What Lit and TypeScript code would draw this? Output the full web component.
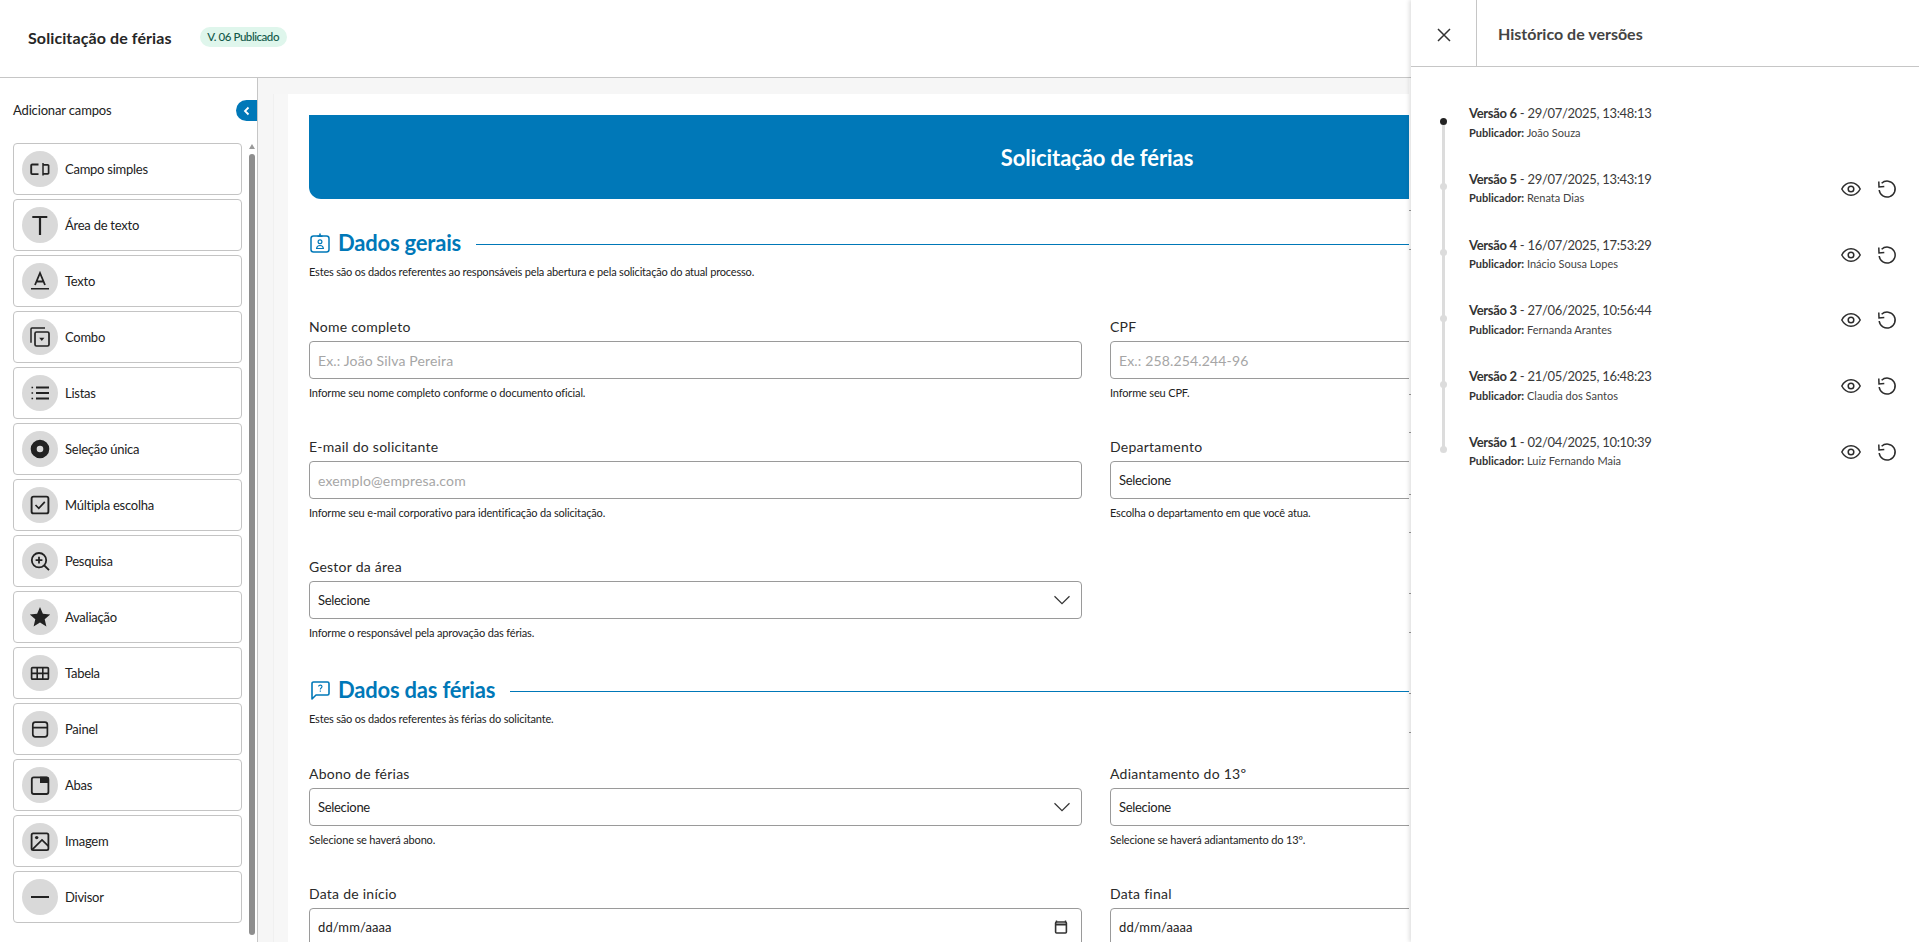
import { LitElement, html, css, svg } from "lit";
import { customElement } from "lit/decorators.js";

const ic = (b: unknown) => html`<svg class="ic" viewBox="0 0 36 36" width="36" height="36">${b}</svg>`;

const FIELDS: [string, unknown][] = [
  ["Campo simples", svg`<path d="M16.500 13.500H10.200a1 1 0 0 0-1 1v7.600a1 1 0 0 0 1 1h6.300" fill="none" stroke="#222" stroke-width="1.900"/><path d="M21 12v12.500" stroke="#222" stroke-width="1.500"/><path d="M21 13.800h4.800a.8.8 0 0 1 .8.8v7.400a.8.8 0 0 1-.8.8H21" fill="none" stroke="#222" stroke-width="1.700"/>`],
  ["Área de texto", svg`<path d="M10.300 10h15M18 10v18" fill="none" stroke="#222" stroke-width="2.200"/>`],
  ["Texto", svg`<path d="M13 22L18 10l5 12M14.600 18.500h6.800" fill="none" stroke="#222" stroke-width="1.800"/><path d="M9 25.800h18" stroke="#222" stroke-width="1.600"/>`],
  ["Combo", svg`<path d="M9 23.700V10a1 1 0 0 1 1-1h13" fill="none" stroke="#222" stroke-width="1.500"/><rect x="13" y="13" width="14" height="14" rx="1.500" fill="none" stroke="#222" stroke-width="1.700"/><path d="M17.200 18.800h5.200L19.800 22z" fill="#222"/>`],
  ["Listas", svg`<path d="M14 12.500h13M14 18h13M14 23.500h13" stroke="#222" stroke-width="1.800"/><path d="M10.300 11.700v1.600M10.300 17.200v1.600M10.300 22.700v1.600" stroke="#222" stroke-width="1.600"/>`],
  ["Seleção única", svg`<circle cx="18" cy="18" r="6.300" fill="none" stroke="#222" stroke-width="6"/>`],
  ["Múltipla escolha", svg`<rect x="9.600" y="9.600" width="16.800" height="16.800" rx="2" fill="none" stroke="#222" stroke-width="1.900"/><path d="M13.500 18l3.300 3.300 6-6.500" fill="none" stroke="#222" stroke-width="1.700"/>`],
  ["Pesquisa", svg`<circle cx="17" cy="17.200" r="7.200" fill="none" stroke="#222" stroke-width="1.800"/><path d="M22.300 22.500L27 27.200M13.600 17.200h6.800M17 13.800v6.800" fill="none" stroke="#222" stroke-width="1.800"/>`],
  ["Avaliação", svg`<path d="M18 8l2.900 6.800 7.300.6-5.500 4.800 1.700 7.200-6.400-3.800-6.400 3.800 1.700-7.200-5.500-4.800 7.300-.6z" fill="#222"/>`],
  ["Tabela", svg`<rect x="9.600" y="12.600" width="16.800" height="11.600" rx="1" fill="none" stroke="#222" stroke-width="1.700"/><path d="M15.200 12.600v11.600M20.800 12.600v11.600M9.600 18.400h16.800" stroke="#222" stroke-width="1.600"/>`],
  ["Painel", svg`<rect x="10.800" y="11.200" width="14.600" height="14.600" rx="2.600" fill="none" stroke="#222" stroke-width="1.700"/><path d="M10.800 16.600h14.600" stroke="#222" stroke-width="1.700"/>`],
  ["Abas", svg`<rect x="9.800" y="10.400" width="16.600" height="16.600" rx="2" fill="none" stroke="#222" stroke-width="1.800"/><path d="M18 9.800h7a2 2 0 0 1 2 2V16h-9z" fill="#222"/>`],
  ["Imagem", svg`<rect x="9.600" y="10.400" width="16.800" height="16.800" rx="1.600" fill="none" stroke="#222" stroke-width="1.800"/><circle cx="14.700" cy="14.600" r="1.700" fill="#222"/><path d="M10.200 26.600L20 17l6.400 6.200" fill="none" stroke="#222" stroke-width="1.700"/>`],
  ["Divisor", svg`<path d="M9 18h18" stroke="#222" stroke-width="1.800"/>`],
];

const VERSIONS = [
  ["Versão 6", "29/07/2025, 13:48:13", "João Souza"],
  ["Versão 5", "29/07/2025, 13:43:19", "Renata Dias"],
  ["Versão 4", "16/07/2025, 17:53:29", "Inácio Sousa Lopes"],
  ["Versão 3", "27/06/2025, 10:56:44", "Fernanda Arantes"],
  ["Versão 2", "21/05/2025, 16:48:23", "Claudia dos Santos"],
  ["Versão 1", "02/04/2025, 10:10:39", "Luiz Fernando Maia"],
];

const TICKS = [210, 249, 394, 432, 494, 532, 593, 632, 693, 732];

type Kind = "input" | "select" | "date";
const chevron = html`<svg class="tail chev" width="18" height="18" viewBox="0 0 18 18"><path d="M1.500 5.200L9 12.600l7.500-7.400" fill="none" stroke="#333" stroke-width="1.200"/></svg>`;
const calendar = html`<svg class="tail" width="18" height="18" viewBox="0 0 18 18"><path d="M4.500 2.500v2M13.500 2.500v2" stroke="#333" stroke-width="1.400"/><rect x="3.600" y="4" width="10.800" height="11" rx="1" fill="none" stroke="#333" stroke-width="1.600"/><path d="M3.600 6.500h10.800" stroke="#333" stroke-width="2"/></svg>`;

function field(label: string, kind: Kind, value: string, hint: string, placeholder = false) {
  return html`<div class="field">
    <div class="label">${label}</div>
    <div class="box ${placeholder ? "ph" : ""} ${kind}"><span>${value}</span>${kind === "select" ? chevron : kind === "date" ? calendar : ""}</div>
    ${hint ? html`<div class="hint">${hint}</div>` : ""}
  </div>`;
}

@customElement("app-root")
export class AppRoot extends LitElement {
  static styles = css`
    :host { display: block; position: relative; width: 100%; height: 100vh; overflow: hidden; background: #fff;
      font-family: "Lato", "Noto Sans", sans-serif; color: #222; }
    * { box-sizing: border-box; }
    .top { height: 78px; border-bottom: 1px solid #c6c6c6; display: flex; align-items: center; padding: 0 0 2px 28px; }
    .top h1 { margin: 0; font-size: 16px; font-weight: 700; color: #262626; line-height: 20px; letter-spacing: 0.1px; }
    .badge { margin: -1px 0 0 28px; height: 20px; width: 87px; border-radius: 10px; background: #dff6ec; color: #12594a;
      font-size: 11.500px; line-height: 20px; text-align: center; font-weight: 500; white-space: nowrap; letter-spacing: -0.45px; }
    .body { display: flex; height: calc(100vh - 78px); }
    .side { width: 258px; flex: none; border-right: 1px solid #c6c6c6; display: flex; flex-direction: column; }
    .side-head { display: flex; justify-content: space-between; align-items: center; height: 21px; margin: 22px 0 22px 13px; font-size: 13px; letter-spacing: -0.15px; }
    .side-head > span:first-child { padding-bottom: 2px; }
    .collapse { width: 21px; height: 21px; background: #0078b8; border-radius: 11px 0 0 11px; display: flex; align-items: center; justify-content: center; }
    .side-main { display: flex; flex: 1; min-height: 0; }
    .list { margin: 0 0 0 13px; padding: 0; list-style: none; width: 229px; display: flex; flex-direction: column; gap: 4px; }
    .item { height: 52px; border: 1px solid #c4c4c4; border-radius: 4px; display: flex; align-items: center; padding-left: 8px; gap: 7px; font-size: 13px; letter-spacing: -0.25px; }
    .item span { padding-bottom: 1px; }
    .ic { width: 36px; height: 36px; background: #d9d9d9; border-radius: 50%; flex: none; }
    .scroll { margin-left: 7px; width: 6px; display: flex; flex-direction: column; align-items: center; height: 792px; }
    .arrow { margin-top: 1px; width: 0; height: 0; border: 3px solid transparent; border-top: 0; border-bottom: 5px solid #9a9a9a; }
    .thumb { margin-top: 5px; flex: 1; width: 6px; border-radius: 3px; background: #8e8e8e; }
    .canvas { flex: 1; min-width: 0; background: #f6f6f6; padding: 16px 0 0 15px; overflow: hidden; }
    .sheet { width: 1640px; height: 100%; background: #f7f7f7; border-left: 1px solid #f0f0f0; padding-left: 14px; }
    .page { background: #fff; height: 100%; padding: 21px 0 0 21px; }
    .banner { width: 1578px; height: 84px; background: #0078b8; border-bottom-left-radius: 12px; color: #fff; display: flex; align-items: center;
      justify-content: center; font-size: 22px; font-weight: 700; letter-spacing: -0.1px; padding-right: 2px; }
    .sec { display: flex; align-items: center; height: 30px; margin-top: 29px; width: 1100px; }
    .sec.second { margin-top: 35.300px; }
    .sec svg { flex: none; width: 22px; height: 22px; margin-right: 7px; margin-left: 0; }
    .sec h2 { margin: 0; font-size: 22px; font-weight: 700; color: #0078b8; line-height: 30px; white-space: nowrap; letter-spacing: -0.2px; }
    .sec i { flex: 1; height: 1px; background: #0078b8; margin-left: 15px; margin-top: 2px; }
    .desc { margin: 7px 0 0; font-size: 11px; line-height: 14px; color: #222; letter-spacing: -0.18px; }
    .grid { display: grid; grid-template-columns: 773px 773px; column-gap: 28px; row-gap: 38px; margin-top: 39px; }
    .label { font-size: 14px; line-height: 17px; letter-spacing: 0.25px; color: #2a2a2a; }
    .box { margin-top: 6px; height: 38px; border: 1px solid #9a9a9a; border-radius: 4px; padding: 0 9px 0 8px; display: flex; align-items: center;
      justify-content: space-between; font-size: 13px; letter-spacing: -0.3px; color: #222; }
    .box.ph { color: #a6a6a6; font-size: 14px; letter-spacing: 0.15px; }
    .box.date span { letter-spacing: 0.1px; }
    .hint { margin-top: 7px; font-size: 11px; line-height: 14px; color: #222; letter-spacing: -0.16px; }
    .tail { flex: none; margin-right: 2px; }
    .tail.chev { margin-right: 1px; }
    .ticks { position: absolute; left: 1409px; top: 78px; bottom: 0; width: 2px; background: #fff; }
    .ticks b { position: absolute; left: 0; width: 2px; height: 1px; background: #9a9a9a; }
    .panel { position: absolute; left: 1411px; top: 0; right: 0; bottom: 0; background: #fff; box-shadow: -2px 0 4px rgba(0,0,0,.12); }
    .p-head { height: 67px; border-bottom: 1px solid #c6c6c6; display: flex; }
    .close { width: 66px; border-right: 1px solid #c6c6c6; display: flex; align-items: center; justify-content: center; padding-top: 3px; }
    .p-head h3 { margin: 0 0 0 21px; font-size: 16px; font-weight: 700; line-height: 67px; color: #444; height: 67px; }
    .tl { padding: 36px 22px 0 25.600px; margin: 0; list-style: none; }
    .v { position: relative; height: 65.800px; display: flex; }
    .dotcol { width: 14px; flex: none; position: relative; }
    .dot { position: absolute; left: 3.200px; top: 14.500px; width: 7px; height: 7px; border-radius: 50%; background: #dcdcdc; }
    .v:first-child .dot { background: #222; }
    .rail { position: absolute; left: 5.700px; top: 18px; width: 2.400px; height: 65.800px; background: #dcdcdc; }
    .txt { margin-left: 18.400px; flex: 1; }
    .vt { font-size: 13px; line-height: 20px; color: #3a3a3a; letter-spacing: -0.3px; }
    .vt b { font-weight: 700; color: #333; }
    .vp { font-size: 11px; line-height: 16px; margin-top: 1.500px; color: #444; }
    .vp b { font-weight: 700; color: #333; }
    .acts { display: flex; gap: 16.400px; margin-top: 10px; align-self: flex-start; }
  `;

  render() {
    return html`
      <header class="top"><h1>Solicitação de férias</h1><span class="badge">V. 06 Publicado</span></header>
      <div class="body">
        <aside class="side">
          <div class="side-head"><span>Adicionar campos</span>
            <span class="collapse"><svg width="10" height="10" viewBox="0 0 10 10"><path d="M6.500 1.500L3 5l3.500 3.500" fill="none" stroke="#fff" stroke-width="1.800"/></svg></span>
          </div>
          <div class="side-main">
            <ul class="list">${FIELDS.map(([n, b]) => html`<li class="item">${ic(b)}<span>${n}</span></li>`)}</ul>
            <div class="scroll"><div class="arrow"></div><div class="thumb"></div></div>
          </div>
        </aside>
        <main class="canvas"><div class="sheet"><div class="page">
          <div class="banner">Solicitação de férias</div>
          <div class="sec">
            <svg viewBox="0 0 22 22"><rect x="2" y="4" width="18" height="16" rx="2.500" fill="none" stroke="#0078b8" stroke-width="1.500"/><path d="M8.500 4.200h5M11 1.500v3" stroke="#0078b8" stroke-width="1.600"/><circle cx="11" cy="9.800" r="1.900" fill="none" stroke="#0078b8" stroke-width="1.200"/><path d="M7.600 16.500c.2-2.200 1.600-3 3.400-3s3.200.8 3.400 3z" fill="none" stroke="#0078b8" stroke-width="1.200"/></svg>
            <h2>Dados gerais</h2><i></i>
          </div>
          <p class="desc">Estes são os dados referentes ao responsáveis pela abertura e pela solicitação do atual processo.</p>
          <div class="grid">
            ${field("Nome completo", "input", "Ex.: João Silva Pereira", "Informe seu nome completo conforme o documento oficial.", true)}
            ${field("CPF", "input", "Ex.: 258.254.244-96", "Informe seu CPF.", true)}
            ${field("E-mail do solicitante", "input", "exemplo@empresa.com", "Informe seu e-mail corporativo para identificação da solicitação.", true)}
            ${field("Departamento", "select", "Selecione", "Escolha o departamento em que você atua.")}
            ${field("Gestor da área", "select", "Selecione", "Informe o responsável pela aprovação das férias.")}
          </div>
          <div class="sec second">
            <svg viewBox="0 0 22 22"><path d="M3 20V4.500A1.500 1.500 0 0 1 4.500 3h14A1.500 1.500 0 0 1 20 4.500v10a1.500 1.500 0 0 1-1.500 1.500H7z" fill="none" stroke="#0078b8" stroke-width="1.600" stroke-linejoin="round"/><path d="M9.600 7.600c0-2 3.400-2 3.400 0 0 1.400-1.700 1.300-1.700 2.800M11.300 11.600v1.200" fill="none" stroke="#0078b8" stroke-width="1.100"/></svg>
            <h2>Dados das férias</h2><i></i>
          </div>
          <p class="desc">Estes são os dados referentes às férias do solicitante.</p>
          <div class="grid">
            ${field("Abono de férias", "select", "Selecione", "Selecione se haverá abono.")}
            ${field("Adiantamento do 13º", "select", "Selecione", "Selecione se haverá adiantamento do 13º.")}
            ${field("Data de início", "date", "dd/mm/aaaa", "")}
            ${field("Data final", "date", "dd/mm/aaaa", "")}
          </div>
        </div></div></main>
      </div>
      <div class="ticks">${TICKS.map((t) => html`<b style="top:${t - 78}px"></b>`)}</div>
      <section class="panel">
        <div class="p-head">
          <div class="close"><svg width="14" height="14" viewBox="0 0 14 14"><path d="M1 1l12 12M13 1L1 13" stroke="#333" stroke-width="1.500"/></svg></div>
          <h3>Histórico de versões</h3>
        </div>
        <ul class="tl">
          ${VERSIONS.map(([n, d, p], i) => html`<li class="v">
            <div class="dotcol">${i < 5 ? html`<span class="rail"></span>` : ""}<span class="dot"></span></div>
            <div class="txt"><div class="vt"><b>${n}</b> - ${d}</div><div class="vp"><b>Publicador:</b> ${p}</div></div>
            ${i > 0 ? html`<div class="acts">
              <svg width="20" height="20" viewBox="0 0 20 20"><path d="M.8 10C3 5.800 6.200 3.800 10 3.800s7 2 9.200 6.200c-2.200 4.200-5.400 6.200-9.200 6.200S3 14.200.8 10z" fill="none" stroke="#2c2c2c" stroke-width="1.500"/><circle cx="10" cy="10" r="2.800" fill="none" stroke="#2c2c2c" stroke-width="1.500"/></svg>
              <svg width="20" height="20" viewBox="0 0 20 20"><path d="M4.600 4.300A8 8 0 1 1 2.200 11" fill="none" stroke="#2c2c2c" stroke-width="1.500"/><path d="M1.800 2.500L2 8l5.300-.6" fill="none" stroke="#2c2c2c" stroke-width="1.500"/></svg>
            </div>` : ""}
          </li>`)}
        </ul>
      </section>
    `;
  }
}
